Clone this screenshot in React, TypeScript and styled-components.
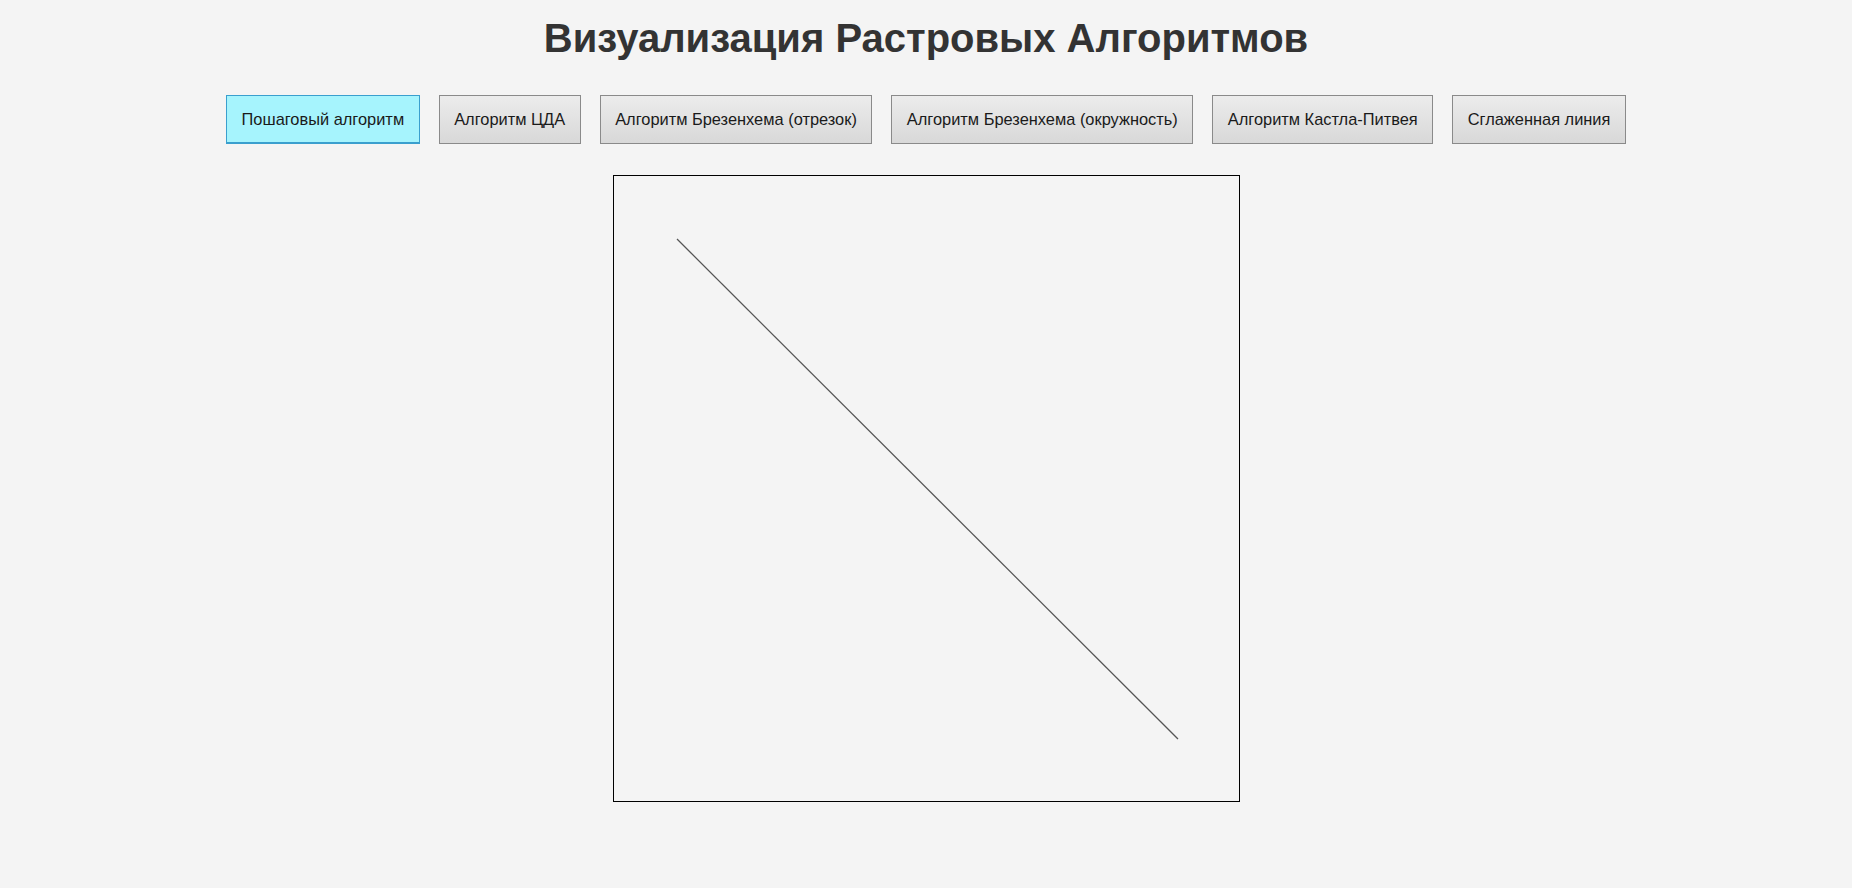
import React, { useState } from "react";
import styled, { createGlobalStyle } from "styled-components";

const Global = createGlobalStyle`
  html, body {
    margin: 0;
    padding: 0;
    background: #f4f4f4;
    font-family: "Liberation Sans", Arial, sans-serif;
  }
`;

const Page = styled.div`
  display: flex;
  flex-direction: column;
  align-items: center;
  padding-top: 14px;
  min-height: 888px;
  box-sizing: border-box;
`;

const Title = styled.h1`
  margin: 0;
  font-size: 40px;
  line-height: 48px;
  font-weight: bold;
  color: #333333;
`;

const Toolbar = styled.div`
  display: flex;
  gap: 19px;
  margin-top: 33px;
`;

const AlgoButton = styled.button<{ $active?: boolean }>`
  font-family: "Liberation Sans", Arial, sans-serif;
  font-size: 16.4px;
  line-height: 21px;
  padding: 0 14.5px;
  color: #1a1a1a;
  cursor: pointer;
  border: 1px solid ${(p) => (p.$active ? "#3a9fce" : "#8a8a8a")};
  border-bottom-width: ${(p) => (p.$active ? "2px" : "1px")};
  background: ${(p) =>
    p.$active ? "#a6f4fd" : "linear-gradient(to bottom, #ececec, #d8d8d8)"};
  box-sizing: border-box;
  height: 49px;
`;

const CanvasFrame = styled.div`
  margin-top: 31px;
  width: 627px;
  height: 627px;
  border: 1px solid #000;
  box-sizing: border-box;
  background: #f4f4f4;
`;

const Drawing = styled.svg`
  display: block;
  width: 625px;
  height: 625px;
`;

const algorithms = [
  "Пошаговый алгоритм",
  "Алгоритм ЦДА",
  "Алгоритм Брезенхема (отрезок)",
  "Алгоритм Брезенхема (окружность)",
  "Алгоритм Кастла-Питвея",
  "Сглаженная линия",
];

export default function App() {
  const [active, setActive] = useState(0);
  return (
    <>
      <Global />
      <Page>
        <Title>Визуализация Растровых Алгоритмов</Title>
        <Toolbar>
          {algorithms.map((a, i) => (
            <AlgoButton key={a} $active={i === active} onClick={() => setActive(i)}>
              {a}
            </AlgoButton>
          ))}
        </Toolbar>
        <CanvasFrame>
          <Drawing viewBox="0 0 625 625">
            <line x1="63" y1="63" x2="564" y2="563" stroke="#555" strokeWidth="1.3" />
          </Drawing>
        </CanvasFrame>
      </Page>
    </>
  );
}
